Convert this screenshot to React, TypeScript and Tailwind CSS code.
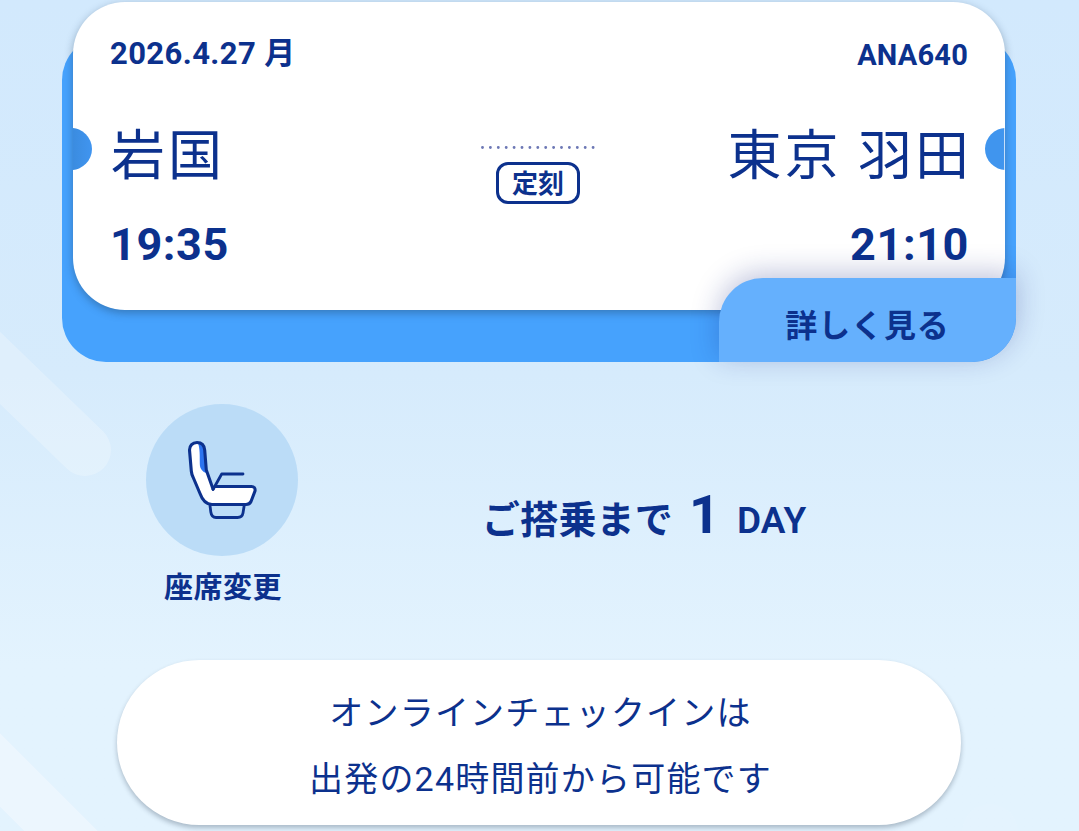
import React from "react";

function SeatIcon() {
  return (
    <svg viewBox="0 0 80 86" className="mt-[4px] h-[86px] w-[80px]" fill="none" stroke="#0c318d" strokeWidth="3.100" strokeLinecap="round" strokeLinejoin="round">
      <path
        d="M31 50 L24.300 31 L22.700 11 C22.200 5.500 19 3.500 15 3.500 C10.500 3.500 7.500 6.500 7.500 11 L10 34 L18 54 C20.500 62 24 65.500 30 65.500 L64 65.500 C66.500 65.500 68 64.500 69 63 L73 52 C73.500 49 72 47.500 69.500 47.500 L33 47.500 Z"
        fill="#fff"
        stroke="none"
      />
      <path
        d="M16 4 C20 4.500 22 8 22.700 11 L24.300 34 C21 33 17.800 30 17.800 25 C17.800 16 18 10 16 4 Z"
        fill="#2c73ef"
        stroke="none"
      />
      <path d="M31 50 L24.300 31 L22.700 11 C22.200 5.500 19 3.500 15 3.500 C10.500 3.500 7.500 6.500 7.500 11 L9.300 32 C9.500 34 10 36 11 38 L18 54.500 C20.500 61.500 24 65.500 30 65.500 L64 65.500 C66.500 65.500 68 64.500 69 62.500 L73 52 C73.500 49 72 47.500 69.500 47.500 L33 47.500" />
      <path d="M31 50.500 L39.700 35 L61 35" strokeWidth="2.800" />
      <path d="M28 66.500 L28.800 73 C29.300 76.500 31.300 78.500 34 78.500 L55.500 78.500 C58.500 78.500 60.500 77 61 74 L62.200 66.500" strokeWidth="2.800" />
    </svg>
  );
}

function Backdrop() {
  return (
    <svg className="absolute inset-0 h-[831px] w-[1079px]" viewBox="0 0 1079 831">
      <g stroke="#fff" strokeLinecap="round">
        <path d="M-60 310 L85 450" strokeWidth="52" opacity="0.24" />
        <path d="M-60 710 L100 870" strokeWidth="52" opacity="0.33" />
      </g>
      <circle cx="990" cy="832" r="28" fill="#fff" opacity="0.06" />
    </svg>
  );
}

function Ticket() {
  return (
    <section className="mx-[62px] grid h-[362px] w-[954px] shrink-0 grid-cols-1 grid-rows-1">
      <div className="col-start-1 row-start-1 mt-9 rounded-[44px] bg-[#46a2fd]" />
      <div className="relative col-start-1 row-start-1 mx-[11px] mt-[2px] h-[308px] overflow-hidden rounded-[52px] bg-white px-[37px]">
        <div className="absolute top-[126px] -left-[23px] size-[42px] rounded-full bg-linear-to-r from-[#3b8ce0] from-55% to-[#4095f0]" />
        <div className="absolute top-[126px] -right-[22px] size-[42px] rounded-full bg-[#4095ee]" />
        <div className="absolute top-[126px] right-0 h-[42px] w-px bg-white/70" />
        <div className="flex h-[101px] items-center justify-between font-bold">
          <p className="mt-[2px] text-[31px] leading-none tracking-[0.4px]">2026.4.27 月</p>
          <p className="mt-[5px] text-[29px] leading-none tracking-[0.2px]">ANA640</p>
        </div>
        <div className="grid h-[106px] grid-cols-[1fr_auto_1fr] items-center pt-[2px]">
          <p className="ml-px text-[54px] leading-none tracking-[3px]">岩国</p>
          <div className="mt-[35px] mr-[2px] flex flex-col items-center">
            <svg className="h-[3px] w-[114px]" viewBox="0 0 114 3">
              <path d="M1.500 1.500 H113" stroke="#6d78b5" strokeWidth="2.900" strokeLinecap="round" strokeDasharray="0 7.900" />
            </svg>
            <span className="mt-[13px] flex h-[42px] w-[84px] items-center justify-center rounded-xl border-3 border-[#0c318d] pt-[2px] text-[26px] leading-none font-bold">定刻</span>
          </div>
          <p className="-mr-[4px] justify-self-end text-[54px] leading-none tracking-[3px]">東京 羽田</p>
        </div>
        <div className="-mt-px flex h-[72px] items-center justify-between text-[45px] leading-none font-bold tracking-[0.6px]">
          <p>19:35</p>
          <p className="-mr-[1px]">21:10</p>
        </div>
      </div>
      <div className="pointer-events-none relative col-start-1 row-start-1 mx-[11px] mt-[2px] h-[308px] rounded-[52px] shadow-[0_3px_8px_rgba(30,60,90,0.4)]" />
      <button className="relative col-start-1 row-start-1 flex h-[84px] w-[297px] items-center justify-center self-end justify-self-end rounded-tl-[44px] rounded-br-[44px] bg-[#65b0fd] pt-[11px] text-[32px] leading-none font-semibold tracking-[0.9px] shadow-[0_-5px_28px_rgba(25,40,130,0.28)]">
        詳しく見る
      </button>
    </section>
  );
}

export default function App() {
  return (
    <main lang="ja" className="relative flex h-[831px] w-[1079px] flex-col overflow-hidden bg-linear-to-b from-[#d2e9fd] from-0% via-[#d6ebfc] via-45% to-[#e3f3fe] to-80% font-['Roboto','Noto_Sans_CJK_JP',sans-serif] text-[#0c318d]">
      <Backdrop />
      <Ticket />
      <section className="relative flex h-[298px] shrink-0 pt-[42px] pl-[146px]">
        <div className="flex w-[152px] flex-col items-center">
          <div className="flex size-[152px] items-center justify-center rounded-full bg-[#bbdcf7]">
            <SeatIcon />
          </div>
          <p className="mt-[18px] ml-[2px] text-[29px] leading-none font-bold tracking-[0.5px] whitespace-nowrap">座席変更</p>
        </div>
        <p className="mt-[84px] ml-[184px] flex h-[56px] items-baseline leading-none font-bold whitespace-nowrap">
          <span className="text-[38px] tracking-[0.2px]">ご搭乗まで</span>
          <span className="ml-[16px] text-[54px]">1</span>
          <span className="ml-[17px] text-[37px] font-semibold tracking-[0.1px]">DAY</span>
        </p>
      </section>
      <div className="relative ml-[117px] flex h-[165px] w-[844px] shrink-0 flex-col items-center rounded-[83px] bg-white pt-[20px] pl-[3px] text-[34px] leading-[66px] tracking-[1.200px] shadow-[0_3px_5px_rgba(20,40,60,0.28)]">
        <p>オンラインチェックインは</p>
        <p>出発の24時間前から可能です</p>
      </div>
    </main>
  );
}
